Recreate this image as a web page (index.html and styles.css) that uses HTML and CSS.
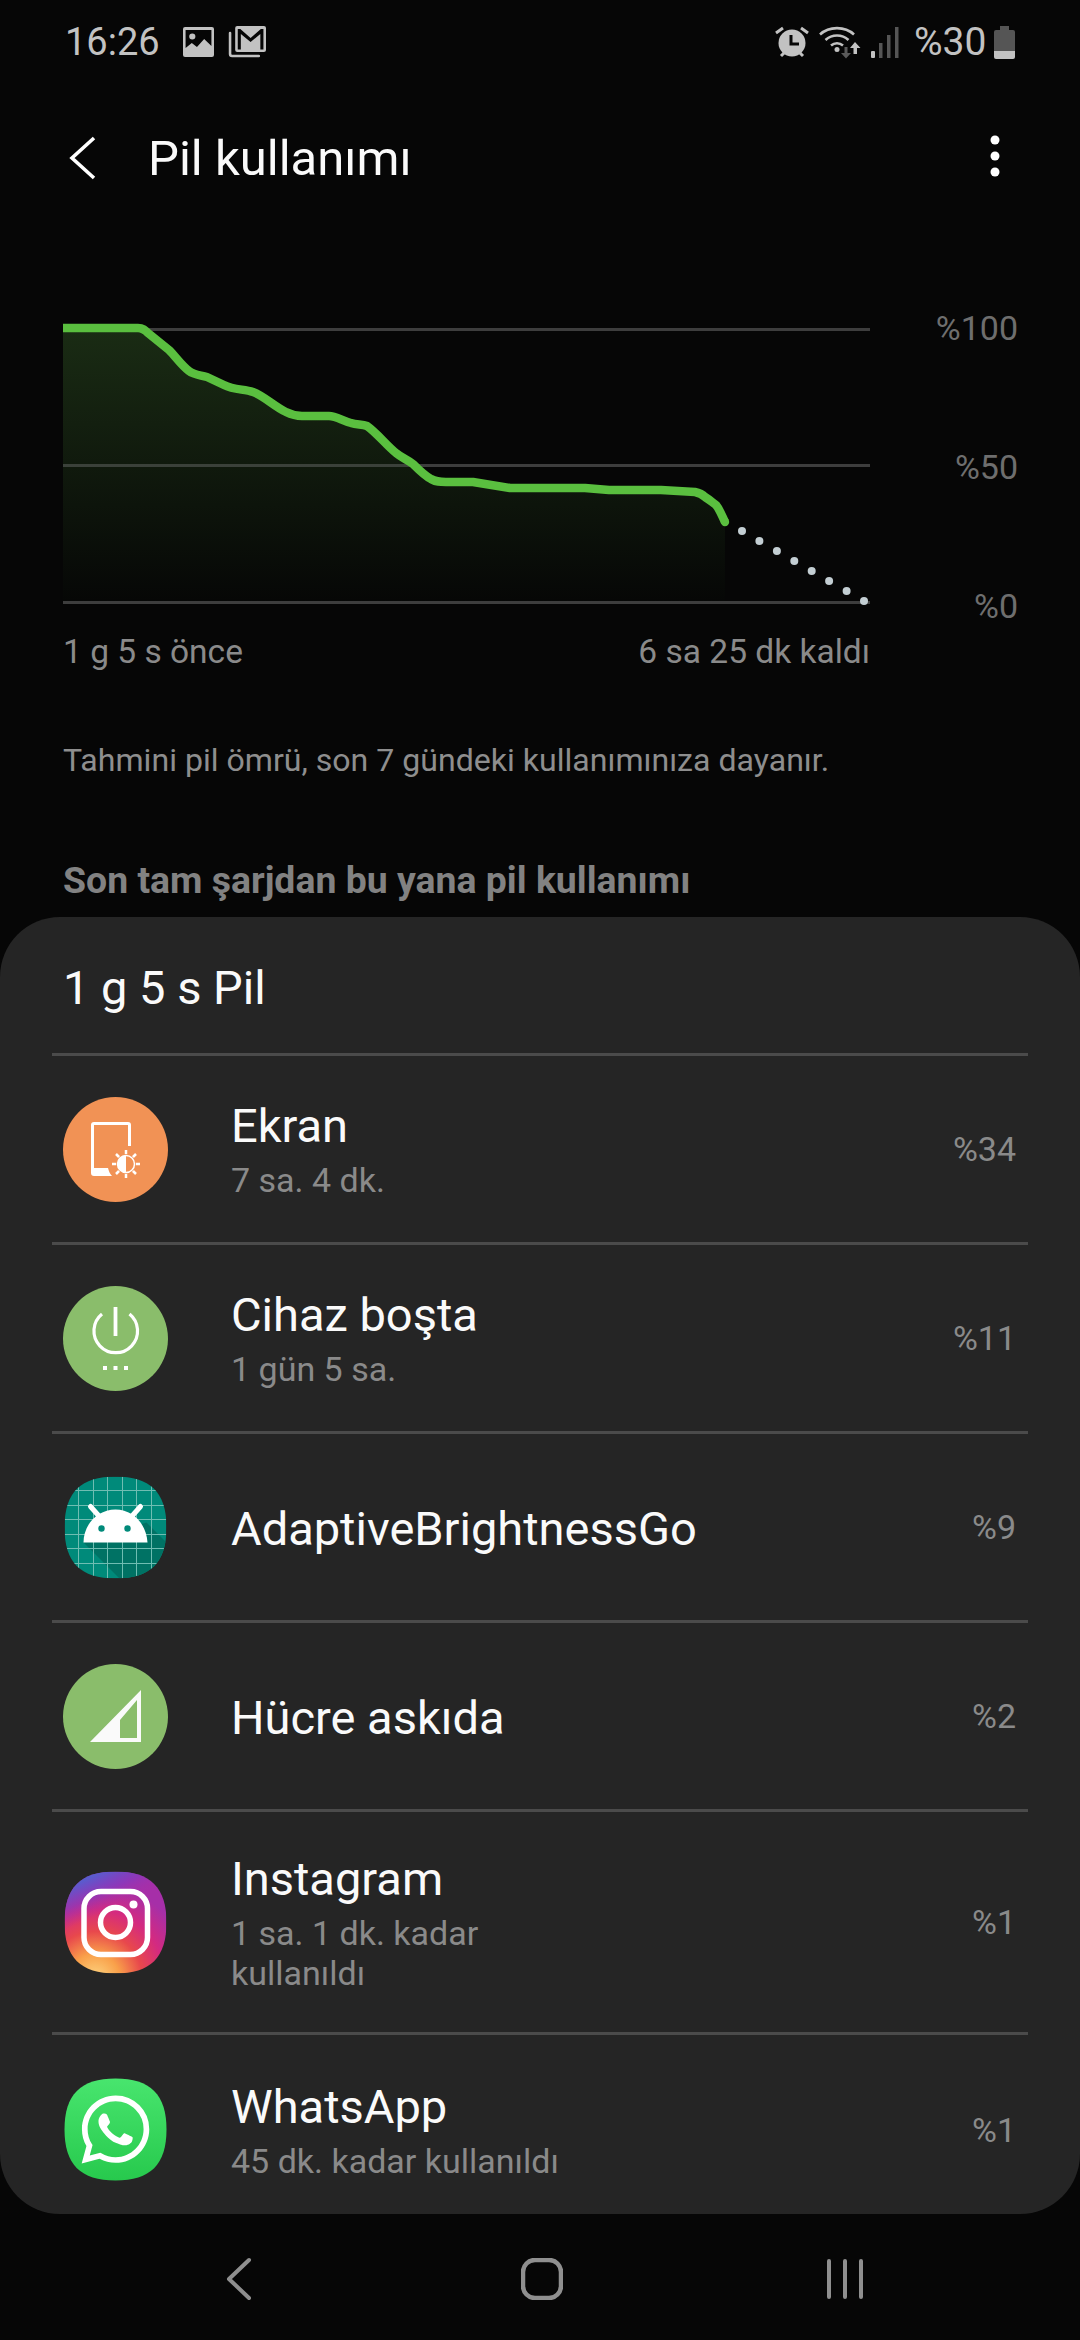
FILE: index.html
```html
<!DOCTYPE html>
<html lang="tr">
<head>
<meta charset="utf-8">
<title>Pil kullanımı</title>
<link rel="stylesheet" href="styles.css">
</head>
<body>
<div class="screen">
  <header class="status">
    <div class="status-left">
      <span class="time">16:26</span>
      <svg class="st-img" width="31" height="30" viewBox="0 0 30 30" preserveAspectRatio="none"><path fill="#c2c2c2" fill-rule="evenodd" d="M2 0h26a2 2 0 0 1 2 2v26a2 2 0 0 1-2 2H2a2 2 0 0 1-2-2V2a2 2 0 0 1 2-2zM2.500 3v18l6-5 5 4 7-8 7 7V3zM9 6.500a3 3 0 1 1 0 6 3 3 0 0 1 0-6z"/></svg>
      <svg class="st-mail" width="38" height="32" viewBox="0 0 37 32" preserveAspectRatio="none"><path fill="none" stroke="#c2c2c2" stroke-width="2.500" stroke-linecap="round" d="M2 7v21a2 2 0 0 0 2 2h26"/><path fill="#c2c2c2" fill-rule="evenodd" d="M9 0h26a2 2 0 0 1 2 2v22a2 2 0 0 1-2 2H9a2 2 0 0 1-2-2V2a2 2 0 0 1 2-2zM9.500 3v20.500h3V8l9.500 8 9.500-8v15.500h3V3h-2.500L22 12 12 3z"/></svg>
    </div>
    <div class="status-right">
      <svg class="st-alarm" width="34" height="32" viewBox="0 0 34 32"><g stroke="#c2c2c2" stroke-width="3" fill="none"><path d="M1 7l7-5M33 7l-7-5M6 30l3-3M28 30l-3-3"/></g><circle cx="17" cy="17" r="13.500" fill="#c2c2c2"/><path d="M16 9v9h8" fill="none" stroke="#060606" stroke-width="3"/></svg>
      <svg class="st-wifi" width="44" height="34" viewBox="0 0 44 34"><g fill="none" stroke="#c2c2c2" stroke-width="2.600"><path d="M1 9.500C10 1 26 1 35 9.500"/><path d="M6.500 15C13 9 23 9 29.500 15"/><path d="M12 20.500c3.500-3 8.500-3 12 0"/></g><circle cx="18" cy="24.500" r="2.500" fill="#c2c2c2"/><path fill="#5a5a5a" d="M25.500 22h3v6h3.500l-5 5.500-5-5.500h3.500z"/><path fill="#c2c2c2" d="M36 17l5.500 6H38v6h-3.500v-6H31z"/></svg>
      <svg class="st-signal" width="28" height="31" viewBox="0 0 28 31"><rect x="0" y="24" width="4" height="7" rx="1" fill="#c2c2c2"/><rect x="8" y="16" width="3.500" height="15" fill="#555"/><rect x="16" y="8" width="3.500" height="23" fill="#555"/><rect x="24" y="0" width="3.500" height="31" fill="#555"/></svg>
      <span class="batt-text">%30</span>
      <svg class="st-batt" width="21" height="33" viewBox="0 0 21 33"><path fill="#555" d="M6 0h9v4h4a2 2 0 0 1 2 2v19H0V6a2 2 0 0 1 2-2h4z"/><path fill="#c2c2c2" d="M0 25h21v6a2 2 0 0 1-2 2H2a2 2 0 0 1-2-2z"/></svg>
    </div>
  </header>

  <div class="appbar">
    <svg class="appbar-back" width="28" height="44" viewBox="0 0 28 44"><path d="M25 2L3 22l22 20" fill="none" stroke="#fff" stroke-width="3.600"/></svg>
    <h1 class="title">Pil kullanımı</h1>
    <svg class="appbar-menu" width="10" height="42" viewBox="0 0 10 42"><circle cx="5" cy="5" r="4.500" fill="#fff"/><circle cx="5" cy="21" r="4.500" fill="#fff"/><circle cx="5" cy="37" r="4.500" fill="#fff"/></svg>
  </div>

  <section class="chart-row">
    <svg class="chart" width="811" height="290" viewBox="61 320 811 290">
      <defs>
        <linearGradient id="area" x1="0" y1="0" x2="0" y2="1">
          <stop offset="0" stop-color="#1a2c14"/>
          <stop offset="1" stop-color="#060706"/>
        </linearGradient>
      </defs>
      <path fill="#3d3d3d" d="M63 328h807v3H63zM63 464h807v3H63zM63 601h807v3H63z"/>
      <path fill="url(#area)" d="M63 328H138C143 328 145 330 148 333L169 350C176 357 182 366 189 371C194 375 200 375 207 377L224 385C234 390 244 389 253 392C264 396 275 407 286 412C292 415 295 416 302 416H329C336 416 343 421 351 423C357 425 362 424 367 426C377 433 387 446 396 453C402 458 408 460 413 464C419 470 425 476 431 479C436 482 440 482 446 482H473L510 488H585L609 490H661L695 492C700 493 703 495 705 497C710 500 713 503 716 505C720 510 722 516 725 522V601H63z"/>
      <path fill="#4a4f49" d="M63 464h350v3H63z" opacity=".75"/>
      <path fill="none" stroke="#5abf3f" stroke-width="8.500" stroke-linecap="butt" stroke-linejoin="round" d="M63 328H138C143 328 145 330 148 333L169 350C176 357 182 366 189 371C194 375 200 375 207 377L224 385C234 390 244 389 253 392C264 396 275 407 286 412C292 415 295 416 302 416H329C336 416 343 421 351 423C357 425 362 424 367 426C377 433 387 446 396 453C402 458 408 460 413 464C419 470 425 476 431 479C436 482 440 482 446 482H473L510 488H585L609 490H661L695 492C700 493 703 495 705 497C710 500 713 503 716 505C720 510 722 516 725 522"/>
      <circle cx="725" cy="522" r="4.200" fill="#5abf3f"/>
      <g fill="#c3ced3">
        <circle cx="742" cy="531" r="4"/><circle cx="759.400" cy="541" r="4"/><circle cx="776.900" cy="551" r="4"/><circle cx="794.300" cy="561" r="4"/><circle cx="811.700" cy="571" r="4"/><circle cx="829.100" cy="581" r="4"/><circle cx="846.600" cy="591" r="4"/><circle cx="864" cy="601" r="4"/>
      </g>
    </svg>
    <div class="y-labels">
      <span>%100</span><span>%50</span><span>%0</span>
    </div>
  </section>

  <div class="x-labels">
    <span>1 g 5 s önce</span><span>6 sa 25 dk kaldı</span>
  </div>

  <p class="note">Tahmini pil ömrü, son 7 gündeki kullanımınıza dayanır.</p>
  <h2 class="section-title">Son tam şarjdan bu yana pil kullanımı</h2>

  <main class="sheet">
    <div class="sheet-head">1 g 5 s Pil</div>

    <div class="row">
      <svg class="icon" width="105" height="105" viewBox="0 0 105 105"><circle cx="52.500" cy="52.500" r="52.500" fill="#f19255"/><path fill="#fff" fill-rule="evenodd" d="M31 25h34a3 3 0 0 1 3 3v21h-3V28H31v43h14c.8 3 2 6 4 8H31a3 3 0 0 1-3-3V28a3 3 0 0 1 3-3z"/><g stroke="#fff" stroke-width="2.500"><path d="M63 53v28M49 67h28M53 57l20 20M73 57L53 77"/></g><circle cx="63" cy="67" r="10" fill="#f19255"/><path fill="#fff" d="M63 58.500a8.500 8.500 0 0 0 0 17z"/><circle cx="63" cy="67" r="8.500" fill="none" stroke="#fff" stroke-width="1.500"/></svg>
      <div class="text"><div class="name">Ekran</div><div class="sub">7 sa. 4 dk.</div></div>
      <div class="pct">%34</div>
    </div>

    <div class="row">
      <svg class="icon" width="105" height="105" viewBox="0 0 105 105"><circle cx="52.500" cy="52.500" r="52.500" fill="#8abd6b"/><g fill="none" stroke="#fff" stroke-width="3.200"><path d="M39 28a21.800 21.800 0 1 0 27.500 0"/><path d="M52.500 21v29" stroke-width="3.800"/></g><path fill="#fff" d="M40 80h4v4h-4zM50.500 80h4v4h-4zM61 80h4v4h-4z"/></svg>
      <div class="text"><div class="name">Cihaz boşta</div><div class="sub">1 gün 5 sa.</div></div>
      <div class="pct">%11</div>
    </div>

    <div class="row">
      <svg class="icon" width="105" height="105" viewBox="-1.500 -1.500 105 105"><defs><clipPath id="sq1"><path d="M51 0C86 0 102 16 102 51S86 102 51 102 0 86 0 51 16 0 51 0z"/></clipPath></defs><g clip-path="url(#sq1)"><rect width="102" height="102" fill="#008a7a"/><path fill="#007264" d="M19 66L55 102H102V66L82 46z"/><path stroke="#6fbdb2" stroke-width="1" fill="none" d="M14 0v102M29 0v102M43 0v102M58 0v102M72 0v102M87 0v102M0 14h102M0 29h102M0 43h102M0 58h102M0 72h102M0 87h102"/><path d="M26 30l8 9M76 30l-8 9" stroke="#fff" stroke-width="5" stroke-linecap="round"/><path fill="#fff" d="M19 66c0-18 14-33 32-33s31 15 32 33z"/><circle cx="37" cy="52" r="3.200" fill="#008a7a"/><circle cx="63" cy="52" r="3.200" fill="#008a7a"/></g></svg>
      <div class="text"><div class="name">AdaptiveBrightnessGo</div></div>
      <div class="pct">%9</div>
    </div>

    <div class="row">
      <svg class="icon" width="105" height="105" viewBox="0 0 105 105"><circle cx="52.500" cy="52.500" r="52.500" fill="#8abd6b"/><path fill="#fafafa" fill-rule="evenodd" d="M27 78L78 26v52zM57 74h17V36L57 56z"/></svg>
      <div class="text"><div class="name">Hücre askıda</div></div>
      <div class="pct">%2</div>
    </div>

    <div class="row">
      <svg class="icon" width="105" height="105" viewBox="-1.500 -1.500 105 105"><defs><clipPath id="sq2"><path d="M51 0C86 0 102 16 102 51S86 102 51 102 0 86 0 51 16 0 51 0z"/></clipPath><radialGradient id="ig1" cx="0.300" cy="1.050" r="1.100"><stop offset="0" stop-color="#fdd783"/><stop offset=".22" stop-color="#f9a04a"/><stop offset=".42" stop-color="#e8484c"/><stop offset=".62" stop-color="#d42a80"/><stop offset=".85" stop-color="#a62fa8"/><stop offset="1" stop-color="#a62fa8"/></radialGradient><linearGradient id="ig2" x1="0.200" y1="0" x2="0.600" y2="0.500"><stop offset="0" stop-color="#3f6fd8"/><stop offset=".6" stop-color="#7d3cc4" stop-opacity=".6"/><stop offset="1" stop-color="#a62fa8" stop-opacity="0"/></linearGradient></defs><g clip-path="url(#sq2)"><rect width="102" height="102" fill="url(#ig1)"/><rect width="102" height="60" fill="url(#ig2)"/></g><rect x="19.500" y="20" width="63.500" height="63" rx="17" fill="none" stroke="#fff" stroke-width="5.500"/><circle cx="51" cy="51" r="15" fill="none" stroke="#fff" stroke-width="5.500"/><circle cx="69" cy="33" r="4" fill="#fff"/></svg>
      <div class="text"><div class="name">Instagram</div><div class="sub sub-narrow">1 sa. 1 dk. kadar kullanıldı</div></div>
      <div class="pct">%1</div>
    </div>

    <div class="row">
      <svg class="icon" width="105" height="105" viewBox="-1.500 -1.500 105 105"><defs><linearGradient id="wa" x1="0" y1="0" x2="0" y2="1"><stop offset="0" stop-color="#48e56e"/><stop offset="1" stop-color="#27c94d"/></linearGradient></defs><path fill="url(#wa)" d="M51 0C86 0 102 16 102 51S86 102 51 102 0 86 0 51 16 0 51 0z"/><g transform="translate(17 17) scale(2.830)"><path fill="#fff" d="M17.472 14.382c-.297-.149-1.758-.867-2.030-.967-.273-.099-.471-.148-.670.150-.197.297-.767.966-.940 1.164-.173.199-.347.223-.644.075-.297-.150-1.255-.463-2.390-1.475-.883-.788-1.480-1.761-1.653-2.059-.173-.297-.018-.458.130-.606.134-.133.298-.347.446-.520.149-.174.198-.298.298-.497.099-.198.050-.371-.025-.520-.075-.149-.669-1.612-.916-2.207-.242-.579-.487-.500-.669-.510-.173-.008-.371-.010-.570-.010-.198 0-.520.074-.792.372-.272.297-1.040 1.016-1.040 2.479 0 1.462 1.065 2.875 1.213 3.074.149.198 2.096 3.200 5.077 4.487.709.306 1.262.489 1.694.625.712.227 1.360.195 1.871.118.571-.085 1.758-.719 2.006-1.413.248-.694.248-1.289.173-1.413-.074-.124-.272-.198-.570-.347m-5.421 7.403h-.004a9.870 9.870 0 01-5.031-1.378l-.361-.214-3.741.982.998-3.648-.235-.374a9.860 9.860 0 01-1.510-5.260c.001-5.450 4.436-9.884 9.888-9.884 2.640 0 5.122 1.030 6.988 2.898a9.825 9.825 0 012.893 6.994c-.003 5.450-4.437 9.884-9.885 9.884m8.413-18.297A11.815 11.815 0 0012.050 0C5.495 0 .160 5.335.157 11.892c0 2.096.547 4.142 1.588 5.945L.057 24l6.305-1.654a11.882 11.882 0 005.683 1.448h.005c6.554 0 11.890-5.335 11.893-11.893a11.821 11.821 0 00-3.480-8.413z"/></g></svg>
      <div class="text"><div class="name">WhatsApp</div><div class="sub">45 dk. kadar kullanıldı</div></div>
      <div class="pct">%1</div>
    </div>
  </main>

  <nav class="navbar">
    <svg class="nav-back" width="26" height="44" viewBox="0 0 26 44"><path d="M23 3L3 22l20 19" fill="none" stroke="#8f8f8f" stroke-width="4" stroke-linecap="round" stroke-linejoin="round"/></svg>
    <svg class="nav-home" width="42" height="42" viewBox="0 0 42 42"><rect x="2" y="2" width="38" height="38" rx="12" fill="none" stroke="#8f8f8f" stroke-width="4.500"/></svg>
    <svg class="nav-recents" width="36" height="40" viewBox="0 0 36 40"><path d="M2 2v36M18 2v36M34 2v36" fill="none" stroke="#8f8f8f" stroke-width="4" stroke-linecap="round"/></svg>
  </nav>
</div>
</body>
</html>
```

FILE: styles.css
```css
* { box-sizing: border-box; }
html, body { margin: 0; padding: 0; background: #060606; }
body { font-family: Roboto, "Noto Sans", sans-serif; }
.screen { width: 1080px; height: 2340px; display: flex; flex-direction: column; overflow: hidden; background: #060606; }

.status { height: 84px; flex: none; display: flex; justify-content: space-between; align-items: center; padding: 0 65px; color: #c2c2c2; font-size: 38px; }
.status-left, .status-right { display: flex; align-items: center; }
.time { width: 118px; line-height: 84px; }
.st-mail { margin-left: 14px; }
.st-wifi { margin-left: 10px; }
.st-signal { margin-left: 8px; }
.batt-text { margin-left: 15px; width: 80px; font-size: 39px; }

.appbar { height: 148px; flex: none; display: flex; align-items: center; padding: 0 80px 0 69px; }
.title { margin: 2px 0 0 51px; flex: 1; font-size: 49px; font-weight: 400; color: #fafafa; line-height: 60px; }
.appbar-menu { margin-top: -4px; }

.chart-row { margin-top: 88px; height: 290px; flex: none; display: flex; padding-left: 61px; }
.chart { flex: none; display: block; }
.y-labels { flex: none; width: 146px; height: 318px; margin-top: -12px; display: flex; flex-direction: column; align-items: flex-end; justify-content: space-between; font-size: 34px; color: #6e6e6e; line-height: 40px; }

.x-labels { margin: 22px 210px 0 63px; flex: none; display: flex; justify-content: space-between; font-size: 33.500px; line-height: 40px; color: #8a8a8a; }
.note { margin: 66px 0 0 63px; flex: none; font-size: 32.100px; line-height: 44px; color: #8e8e8e; }
.section-title { margin: 76px 0 0 63px; flex: none; font-size: 37.400px; line-height: 44px; font-weight: 700; color: #828282; }

.sheet { margin-top: 15px; flex: none; height: 1297px; background: #252525; border-radius: 60px; overflow: hidden; padding: 0 52px; }
.sheet-head { height: 139px; padding: 4px 0 0 11px; display: flex; align-items: center; font-size: 47px; color: #fafafa; border-bottom: 3px solid #4b4b4b; }
.row { min-height: 189px; display: flex; align-items: center; padding: 0 12px 0 11px; border-bottom: 3px solid #4b4b4b; }
.row:last-child { border-bottom: 0; }
.icon { flex: none; display: block; margin-right: 63px; }
.text { flex: 1; padding: 43px 0 39px; }
.name { font-size: 47px; line-height: 48px; color: #fafafa; }
.sub { margin-top: 10px; font-size: 34px; line-height: 40px; color: #8a8a8a; }
.sub-narrow { max-width: 300px; }
.pct { flex: none; font-size: 34px; color: #8a8a8a; }

.navbar { flex: 1; display: flex; align-items: center; padding: 3px 0 0 226px; }
.nav-home { margin-left: 269px; }
.nav-recents { margin-left: 264px; }
```
